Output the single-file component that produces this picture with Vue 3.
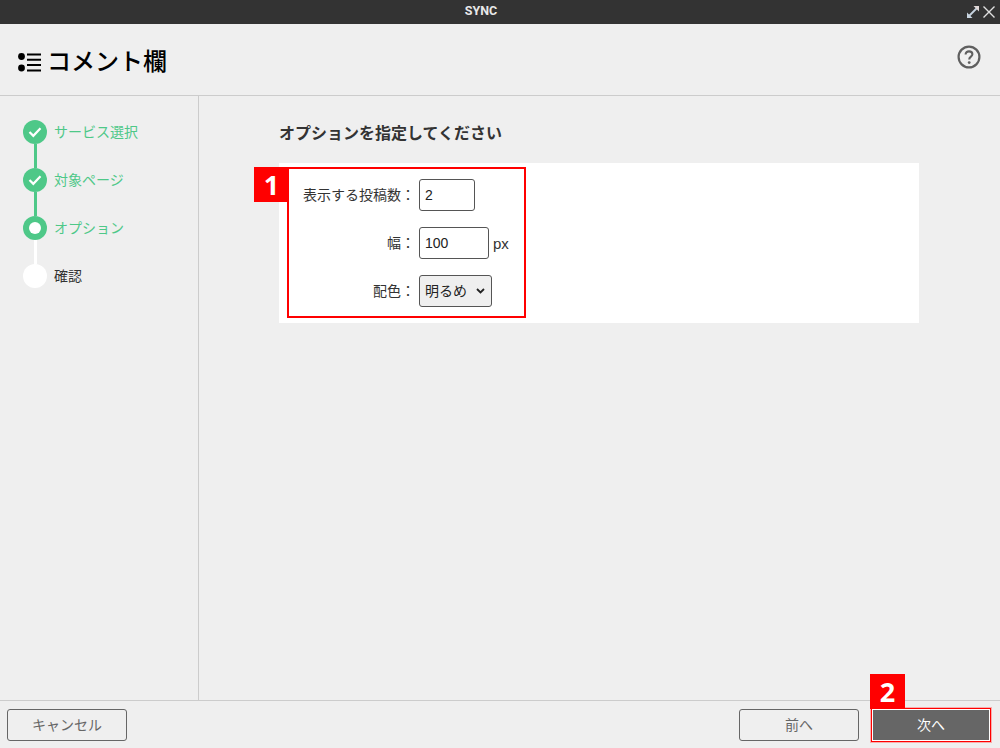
<script setup>
const steps = [
  { label: 'サービス選択', state: 'done' },
  { label: '対象ページ', state: 'done' },
  { label: 'オプション', state: 'current' },
  { label: '確認', state: 'todo' },
]
</script>

<template>
  <div class="app">
    <header class="titlebar">
      <span class="titlebar-name">SYNC</span>
      <div class="window-icons">
        <svg width="14" height="14" viewBox="0 0 14 14">
          <path d="M3 11 L11 3" stroke="#c8d4e0" stroke-width="1.8" fill="none" />
          <path d="M1 7.5 V13 H6.5 Z" fill="#c8d4e0" />
          <path d="M7.5 1 H13 V6.5 Z" fill="#e0d8d8" />
        </svg>
        <svg width="14" height="14" viewBox="0 0 14 14">
          <path d="M1.5 1.5 L12.5 12.5 M12.5 1.5 L1.5 12.5" stroke="#e0e0e0" stroke-width="1.4" fill="none" />
        </svg>
      </div>
    </header>

    <section class="page-head">
      <div class="page-title">
        <svg width="24" height="20" viewBox="0 0 24 20">
          <circle cx="4.5" cy="4.5" r="3.4" fill="#000" />
          <circle cx="4.5" cy="16" r="3.4" fill="#000" />
          <path d="M10 2.5 H24 M10 7.8 H24 M10 13 H24 M10 18.5 H24" stroke="#000" stroke-width="2" fill="none" />
        </svg>
        <h1>コメント欄</h1>
      </div>
      <svg class="help" width="24" height="24" viewBox="0 0 24 24">
        <circle cx="12" cy="12" r="10.4" stroke="#5f5f5f" stroke-width="2.2" fill="none" />
        <path d="M8.6 9.6 C8.6 7.4 10.2 6.4 12 6.4 C14 6.4 15.4 7.6 15.4 9.3 C15.4 11.6 12.2 11.7 12.2 14.4" stroke="#5f5f5f" stroke-width="2.1" fill="none" />
        <circle cx="12.2" cy="17.6" r="1.4" fill="#5f5f5f" />
      </svg>
    </section>

    <div class="body">
      <aside class="sidebar">
        <ol class="steps">
          <li v-for="(s, i) in steps" :key="s.label" class="step" :class="s.state">
            <span class="dot">
              <svg v-if="s.state === 'done'" width="14" height="12" viewBox="0 0 14 12">
                <path d="M1.5 6 L5.3 9.8 L12.5 2.2" stroke="#fff" stroke-width="2.2" fill="none" />
              </svg>
              <span v-else-if="s.state === 'current'" class="inner"></span>
            </span>
            <span v-if="i < steps.length - 1" class="line"></span>
            <span class="step-label">{{ s.label }}</span>
          </li>
        </ol>
      </aside>

      <main class="main">
        <h2>オプションを指定してください</h2>
        <div class="panel">
          <div class="form">
            <label class="row">
              <span class="field-label">表示する投稿数：</span>
              <input class="input w-count" value="2" />
            </label>
            <label class="row">
              <span class="field-label">幅：</span>
              <input class="input w-width" value="100" />
              <span class="unit">px</span>
            </label>
            <label class="row">
              <span class="field-label">配色：</span>
              <span class="select">
                <span class="select-text">明るめ</span>
                <svg width="9" height="6" viewBox="0 0 9 6">
                  <path d="M1 1 L4.5 4.5 L8 1" stroke="#222" stroke-width="1.8" fill="none" />
                </svg>
              </span>
            </label>
            <div class="mark-box">
              <span class="badge badge-one">1</span>
            </div>
          </div>
        </div>
      </main>
    </div>

    <footer class="footer">
      <button class="btn"><span class="btn-text">キャンセル</span></button>
      <div class="footer-right">
        <button class="btn"><span class="btn-text">前へ</span></button>
        <div class="next-wrap">
          <button class="btn primary"><span class="btn-text">次へ</span></button>
          <span class="badge badge-two">2</span>
        </div>
      </div>
    </footer>
  </div>
</template>

<style>
html, body { margin: 0; background: #efefef; }
</style>

<style scoped>
.app {
  width: 1000px;
  height: 748px;
  display: flex;
  flex-direction: column;
  background: #efefef;
  font-family: "Noto Sans CJK JP", "Liberation Sans", sans-serif;
  font-size: 14px;
  color: #333;
  overflow: hidden;
}
.titlebar {
  height: 24px;
  flex: none;
  background: #333;
  position: relative;
  display: flex;
  align-items: center;
  justify-content: center;
  padding-right: 38px;
  box-sizing: border-box;
}
.titlebar-name {
  color: #e8e8e8;
  font: bold 12.5px "Roboto", "Liberation Sans", sans-serif;
  position: relative;
  top: -2px;
}
.window-icons {
  position: absolute;
  right: 4px;
  top: 5px;
  display: flex;
  gap: 2px;
}
.page-head {
  height: 71px;
  flex: none;
  border-bottom: 1px solid #ccc;
  display: flex;
  align-items: center;
  justify-content: space-between;
  padding: 0 19px 0 17px;
}
.page-title {
  display: flex;
  align-items: center;
  gap: 6px;
}
.page-title svg { position: relative; top: 2px; }
.page-title h1 {
  margin: 0;
  font-size: 24px;
  font-weight: 500;
  line-height: 32px;
  color: #000;
}
.help { position: relative; top: -3px; }
.body {
  flex: 1;
  display: flex;
  min-height: 0;
}
.sidebar {
  width: 198px;
  flex: none;
  border-right: 1px solid #ccc;
}
.steps {
  list-style: none;
  margin: 0;
  padding: 24px 0 0 23px;
  display: flex;
  flex-direction: column;
  gap: 24px;
}
.step {
  position: relative;
  height: 24px;
  display: flex;
  align-items: center;
  gap: 7px;
}
.dot {
  width: 24px;
  height: 24px;
  border-radius: 50%;
  background: #fff;
  display: flex;
  align-items: center;
  justify-content: center;
  position: relative;
  z-index: 1;
}
.done .dot, .current .dot { background: #4ec888; }
.inner {
  width: 12px;
  height: 12px;
  border-radius: 50%;
  background: #fff;
}
.line {
  position: absolute;
  left: 10.5px;
  top: 24px;
  width: 3px;
  height: 24px;
  background: #4ec888;
}
.current .line { background: #fff; }
.step-label {
  color: #4ec888;
  font-size: 14px;
  line-height: 20px;
  margin-bottom: 2px;
}
.todo .step-label { color: #333; }
.main {
  flex: 1;
  padding: 25px 81px 0 80px;
}
.main h2 {
  margin: 0 0 20px;
  font-size: 16px;
  line-height: 22px;
  font-weight: 700;
  color: #333;
}
.panel {
  background: #fff;
  height: 160px;
}
.form {
  position: relative;
  display: flex;
  flex-direction: column;
  gap: 16px;
  padding-top: 16px;
}
.row {
  display: flex;
  align-items: center;
  height: 32px;
}
.field-label {
  width: 136px;
  margin-right: 4px;
  padding-bottom: 2px;
  text-align: right;
  font-size: 14px;
  color: #333;
}
.input {
  box-sizing: border-box;
  height: 32px;
  border: 1px solid #555;
  border-radius: 3px;
  background: #fff;
  padding: 0 5px;
  font: 14px "Liberation Sans", sans-serif;
  color: #222;
  outline: none;
}
.w-count { width: 56px; }
.w-width { width: 70px; }
.unit {
  margin-left: 4px;
  font: 15px "Liberation Sans", sans-serif;
}
.select {
  box-sizing: border-box;
  width: 73px;
  height: 32px;
  border: 1px solid #555;
  border-radius: 3px;
  background: #efefef;
  padding: 0 6px 0 5px;
  display: flex;
  align-items: center;
  justify-content: space-between;
  color: #222;
}
.select-text { margin-bottom: 2px; }
.mark-box {
  position: absolute;
  left: 8px;
  top: 4px;
  width: 239px;
  height: 151px;
  box-sizing: border-box;
  border: 2px solid #f00;
  pointer-events: none;
}
.badge {
  position: absolute;
  width: 35px;
  height: 35px;
  background: #f00;
  color: #fff;
  font: bold 27px/35px "Open Sans", "Liberation Sans", sans-serif;
  text-align: center;
}
.badge-one { left: -35px; top: -2px; }
.footer {
  height: 48px;
  flex: none;
  box-sizing: border-box;
  border-top: 1px solid #ccc;
  display: flex;
  align-items: flex-start;
  justify-content: space-between;
  padding: 8px 10px 0 7px;
}
.footer-right {
  display: flex;
  gap: 13px;
}
.btn {
  box-sizing: border-box;
  width: 120px;
  height: 32px;
  border: 1px solid #666;
  border-radius: 3px;
  background: #efefef;
  color: #666;
  font: 14px "Noto Sans CJK JP", "Liberation Sans", sans-serif;
  padding: 0;
}
.btn-text {
  display: block;
  margin-bottom: 3px;
}
.next-wrap { position: relative; }
.btn.primary {
  display: block;
  width: 118px;
  height: 32px;
  background: #666;
  color: #fff;
  border: 1px solid #fff;
  border-radius: 0;
  outline: 1px solid #f00;
  outline-offset: 0;
  box-shadow: 0 0 0 2px rgba(255, 120, 120, 0.55);
}
.badge-two { left: -2px; top: -35px; z-index: 1; }
</style>
